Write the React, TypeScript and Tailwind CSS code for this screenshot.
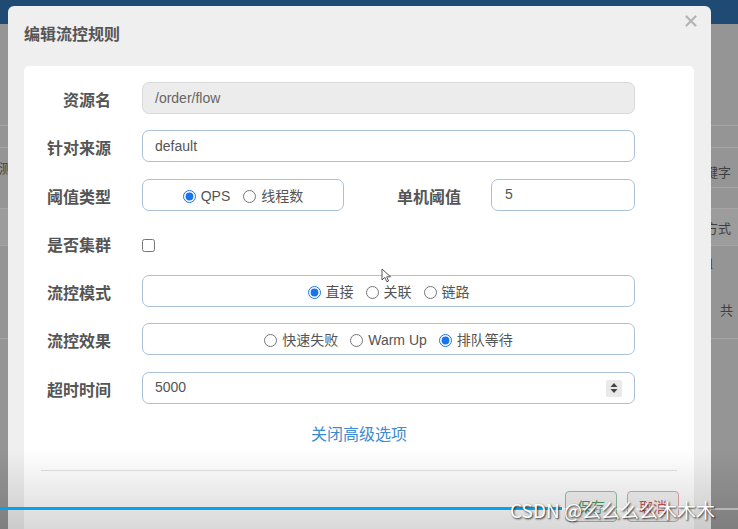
import React from "react";

function Label({ children }: { children: React.ReactNode }) {
  return (
    <div className="w-[87px] shrink-0 mt-[6px] text-right text-[16px] leading-[20px] font-bold text-[#555]">
      {children}
    </div>
  );
}

function Radio({ name, label, checked }: { name: string; label: string; checked?: boolean }) {
  return (
    <label className="flex items-center gap-[5px]">
      <input
        type="radio"
        name={name}
        defaultChecked={checked}
        className="m-0 w-[13px] h-[13px] accent-[#1a73e8]"
      />
      <span>{label}</span>
    </label>
  );
}

export default function App() {
  return (
    <div className="relative w-[738px] h-[529px] overflow-hidden bg-[#959595] font-['Liberation_Sans','Noto_Sans_CJK_SC',sans-serif]">
      {/* page behind the dialog */}
      <div className="flex flex-col h-full text-[13px] text-[#3f3f3f] font-['Noto_Sans_CJK_SC',sans-serif]">
        <div className="h-[24px] shrink-0 bg-[#1f4a74]" />
        <div className="h-[102px] shrink-0 border-b border-[#a6a6a6]" />
        <div className="h-[22px] shrink-0 border-b border-[#a6a6a6]" />
        <div className="h-[40px] shrink-0 flex justify-between">
          <span className="-ml-[1px] mt-[10px]">测</span>
          <span className="pr-[7px] mt-[14px] border-b border-[#a6a6a6] h-[26px]">关键字</span>
        </div>
        <div className="h-[21px] shrink-0 border-b border-[#a6a6a6]" />
        <div className="h-[37px] shrink-0 border-b border-[#a6a6a6] flex justify-end bg-[#9c9c9c]">
          <span className="pr-[7px] mt-[9px]">方式</span>
        </div>
        <div className="h-[93px] shrink-0 border-b border-[#a6a6a6] flex flex-col items-end">
          <span className="mr-[25px] mt-[8px]">l</span>
          <span className="mr-[5px] mt-[26px]">共</span>
        </div>
        <div className="flex-1" />
      </div>

      {/* dialog */}
      <div className="absolute left-[8px] top-[6px] w-[703px] h-[560px] bg-[#efefef] rounded-t-[6px]">
        <div className="relative h-[60px] pl-[16px] pt-[17px]">
          <h4 className="text-[16px] leading-[20px] font-bold text-[#555] font-['Noto_Sans_CJK_SC',sans-serif]">
            编辑流控规则
          </h4>
          <svg
            className="absolute right-[14px] top-[9px]"
            width="12"
            height="12"
            viewBox="0 0 12 12"
          >
            <path d="M1.5 1.5 L10.5 10.5 M10.5 1.5 L1.5 10.5" stroke="#b4b4b4" strokeWidth="2.2" strokeLinecap="round" />
          </svg>
        </div>

        <div className="ml-[16px] w-[670px] h-[500px] bg-white rounded-[5px] pt-[16px] text-[14px] text-[#555]">
          <div className="flex flex-col gap-[16.3px]">
            <div className="flex items-center h-[32px]">
              <Label>资源名</Label>
              <div className="ml-[31px] w-[493px] h-[32px] rounded-[7px] border border-[#d9d9d9] bg-[#ececec] px-[12px] flex items-center text-[#666]">
                /order/flow
              </div>
            </div>

            <div className="flex items-center h-[32px]">
              <Label>针对来源</Label>
              <div className="ml-[31px] w-[493px] h-[32px] rounded-[7px] border border-[#a9c0d6] px-[12px] flex items-center">
                default
              </div>
            </div>

            <div className="flex items-center h-[32px]">
              <Label>阈值类型</Label>
              <div className="ml-[31px] w-[202px] h-[32px] pt-[3px] rounded-[7px] border border-[#a9c0d6] flex items-center justify-center gap-[13px]">
                <Radio name="grade" label="QPS" checked />
                <Radio name="grade" label="线程数" />
              </div>
              <div className="ml-[53px] mt-[6px] w-[64px] text-[16px] leading-[20px] font-bold text-[#555]">单机阈值</div>
              <div className="ml-[30px] w-[144px] h-[32px] rounded-[7px] border border-[#a9c0d6] px-[13px] flex items-center">
                5
              </div>
            </div>

            <div className="flex items-center h-[32px]">
              <Label>是否集群</Label>
              <input type="checkbox" className="ml-[31px] mt-[6px] w-[13px] h-[13px]" />
            </div>

            <div className="flex items-center h-[32px]">
              <Label>流控模式</Label>
              <div className="ml-[31px] w-[493px] h-[32px] pt-[3px] rounded-[7px] border border-[#a9c0d6] flex items-center justify-center gap-[12px]">
                <Radio name="strategy" label="直接" checked />
                <Radio name="strategy" label="关联" />
                <Radio name="strategy" label="链路" />
              </div>
            </div>

            <div className="flex items-center h-[32px]">
              <Label>流控效果</Label>
              <div className="ml-[31px] w-[493px] h-[32px] pt-[3px] rounded-[7px] border border-[#a9c0d6] flex items-center justify-center gap-[12px]">
                <Radio name="behavior" label="快速失败" />
                <Radio name="behavior" label="Warm Up" />
                <Radio name="behavior" label="排队等待" checked />
              </div>
            </div>

            <div className="flex items-center h-[32px]">
              <Label>超时时间</Label>
              <div className="relative ml-[31px] w-[493px] h-[32px] rounded-[7px] border border-[#a9c0d6] px-[12px] flex items-center">
                5000
                <div className="absolute left-[463px] top-[7px] w-[16px] h-[17px] bg-[#e9e9e9] rounded-[2px] flex items-center justify-center">
                  <svg width="8" height="12" viewBox="0 0 8 12">
                    <path d="M4 1 L7.5 5 L0.5 5 Z M0.5 7 L7.5 7 L4 11 Z" fill="#444" />
                  </svg>
                </div>
              </div>
            </div>
          </div>

          <div className="mt-[17px] text-center text-[16px] leading-[24px] text-[#3d8bd0] font-['Noto_Sans_CJK_SC',sans-serif]">
            关闭高级选项
          </div>

          <div className="mx-[17px] mt-[25px] border-t border-[#e2e2e2]" />

          <div className="flex justify-end gap-[10px] pr-[15px] pt-[20px]">
            <button className="w-[52px] h-[31px] rounded-[4px] border border-[#93c4a1] text-[14px] text-[#4e9a60] bg-[#f4f4f4] font-['Noto_Sans_CJK_SC',sans-serif]">
              保存
            </button>
            <button className="w-[52px] h-[31px] rounded-[4px] border border-[#dfa6a6] text-[14px] text-[#c45a5a] bg-[#f4f4f4] font-['Noto_Sans_CJK_SC',sans-serif]">
              取消
            </button>
          </div>
        </div>
      </div>

      {/* mouse cursor */}
      <svg className="absolute left-[381px] top-[268px]" width="11" height="15" viewBox="0 0 11 15">
        <path d="M1 1 L1 12 L3.8 9.4 L5.8 13.8 L7.6 13 L5.7 8.8 L9.6 8.8 Z" fill="#fff" stroke="#555" strokeWidth="1" strokeLinejoin="round" />
      </svg>

      {/* video vignette */}
      <div className="pointer-events-none absolute inset-x-0 bottom-0 h-[80px] bg-gradient-to-b from-transparent to-black/15" />

      {/* progress bar */}
      <div className="absolute left-0 top-[507px] w-[562px] h-[3px] bg-[#00a6ed]" />
      <div className="absolute left-[562px] top-[508px] w-[176px] h-[2px] bg-white/40" />

      {/* watermark */}
      <div className="absolute left-[510px] top-[497px] text-[19px] leading-[26px] text-white whitespace-nowrap font-['Noto_Sans_CJK_SC',sans-serif] [text-shadow:1px_1px_2px_rgba(0,0,0,0.85)]">
        CSDN @么么么么木木木
      </div>
    </div>
  );
}
